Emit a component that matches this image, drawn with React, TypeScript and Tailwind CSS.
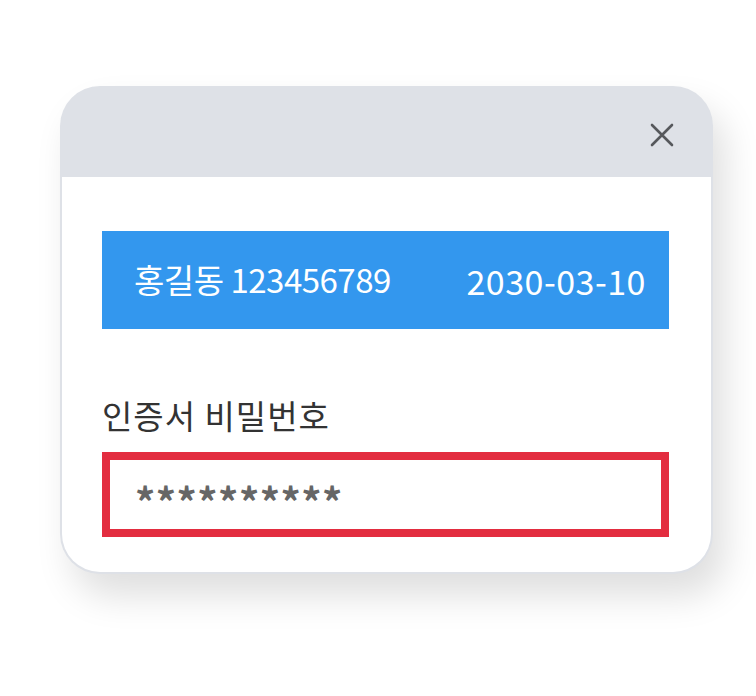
export default function App() {
  const font = { fontFamily: '"Noto Sans CJK KR", "Noto Sans", sans-serif' };
  return (
    <div className="w-[756px] h-[696px] bg-white pt-[86px] pl-[60px]" style={font}>
      <div className="w-[653px] h-[488px] rounded-[40px] bg-[#dee1e7] p-[2px] pt-0 flex flex-col shadow-[12px_22px_36px_rgba(0,0,0,0.13)]">
        <div className="h-[91px] shrink-0 flex items-center justify-end pr-[36px]">
          <svg width="26" height="26" viewBox="0 0 26 26" className="mt-[6px]">
            <path d="M3 3 L23 23 M23 3 L3 23" stroke="#56585c" strokeWidth="2.6" strokeLinecap="round" />
          </svg>
        </div>
        <div className="flex-1 bg-white rounded-b-[38px] pl-[40px] pt-[54px]">
          <div className="w-[567px] h-[98px] bg-[#3397ee] flex items-center justify-between pl-[32px] pr-[23px] text-white">
            <span className="text-[33px] tracking-[-0.5px]">홍길동 123456789</span>
            <span className="text-[34px] tracking-[0.5px]">2030-03-10</span>
          </div>
          <div className="mt-[64px] text-[33px] leading-[44px] text-[#333333] tracking-[1px]">인증서 비밀번호</div>
          <div className="mt-[15px] w-[567px] h-[85px] border-[8px] border-[#e32d40] flex items-center pl-[25px]">
            <span className="text-[40px] leading-[40px] font-bold text-[#666666] tracking-[0.5px] mt-[12px]">**********</span>
          </div>
        </div>
      </div>
    </div>
  );
}
